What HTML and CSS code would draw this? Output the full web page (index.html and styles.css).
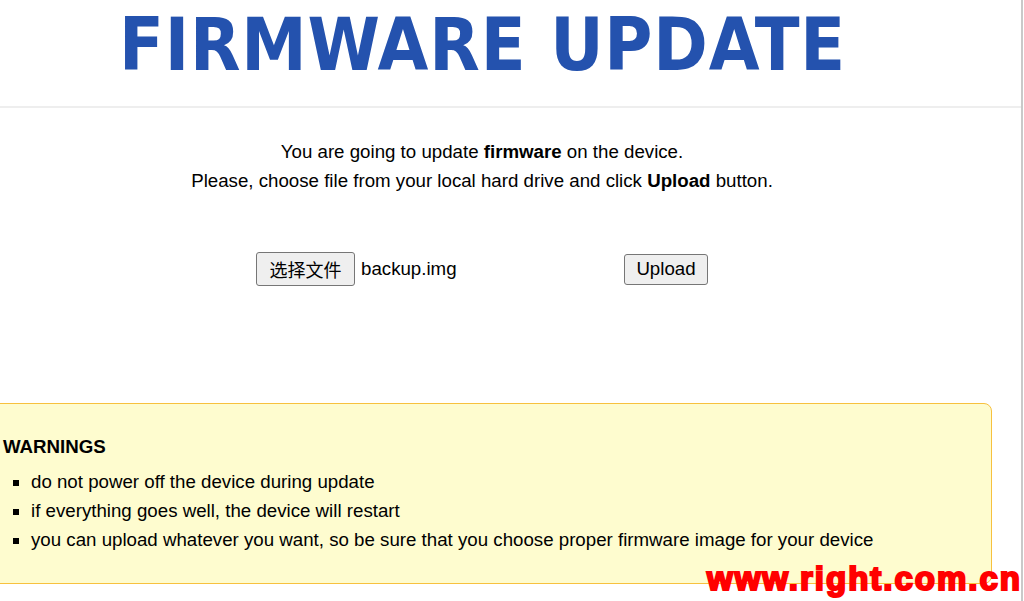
FILE: index.html
```html
<!DOCTYPE html>
<html lang="en">
<head>
<meta charset="utf-8">
<title>Firmware Update</title>
<link rel="stylesheet" href="styles.css">
</head>
<body>
<div class="page">
  <header class="header">
    <div class="column">
      <h1 class="title">FIRMWARE UPDATE</h1>
    </div>
  </header>
  <main class="column content">
    <p class="intro">You are going to update <b>firmware</b> on the device.<br>Please, choose file from your local hard drive and click <b>Upload</b> button.</p>
    <form class="upload-row">
      <div class="file-input">
        <span class="btn btn-file">选择文件</span>
        <span class="file-name">backup.img</span>
      </div>
      <span class="btn btn-upload">Upload</span>
    </form>
    <section class="warning">
      <h2 class="warning-title">WARNINGS</h2>
      <ul class="warning-list">
        <li>do not power off the device during update</li>
        <li>if everything goes well, the device will restart</li>
        <li>you can upload whatever you want, so be sure that you choose proper firmware image for your device</li>
      </ul>
    </section>
  </main>
  <div class="watermark">www.right.com.cn</div>
</div>
</body>
</html>
```

FILE: styles.css
```css
html, body {
  margin: 0;
  padding: 0;
  background: #ffffff;
  overflow: hidden;
}
body {
  font-family: "Liberation Sans", Arial, sans-serif;
  color: #000;
}
.page {
  position: relative;
  width: 1021px;
  height: 601px;
  border-right: 2px solid #c9c9c9;
  overflow: hidden;
}
.column {
  width: 964px;
}
.header {
  height: 106px;
  border-bottom: 2px solid #eeeeee;
}
.title {
  margin: 0;
  padding-top: 5px;
  padding-left: 1px;
  text-align: center;
  font-family: "DejaVu Sans Condensed", "DejaVu Sans", sans-serif;
  font-stretch: condensed;
  font-weight: bold;
  font-size: 73px;
  line-height: 80px;
  color: #2452ae;
  letter-spacing: 0.85px;
}
.content {
  display: flex;
  flex-direction: column;
  align-items: center;
}
.intro {
  margin: 30px 0 0;
  text-align: center;
  font-size: 18.7px;
  line-height: 28.5px;
}
.upload-row {
  margin: 57px 0 0;
  display: flex;
  align-items: center;
  gap: 4px;
  font-size: 18.7px;
}
.file-input {
  width: 364px;
  display: flex;
  align-items: center;
  gap: 6px;
}
.btn {
  box-sizing: border-box;
  display: inline-flex;
  align-items: center;
  justify-content: center;
  background: #efefef;
  border: 1px solid #767676;
  border-radius: 3px;
  color: #000;
}
.btn-file {
  width: 99px;
  height: 34px;
  font-family: "Noto Sans CJK SC", "Liberation Sans", sans-serif;
  font-size: 18px;
}
.btn-upload {
  width: 84px;
  height: 31px;
  font-size: 18.7px;
}
.warning {
  box-sizing: border-box;
  align-self: flex-start;
  margin: 117px 0 0 -27px;
  width: 1019px;
  height: 181px;
  padding: 28px 0 0 29px;
  background: #fefccf;
  border: 1px solid #f7c13e;
  border-radius: 8px;
}
.warning-title {
  margin: 0;
  font-size: 18.7px;
  line-height: 29px;
  font-weight: bold;
}
.warning-list {
  margin: 6px 0 0;
  padding-left: 28px;
  list-style: square;
  font-size: 18.7px;
  line-height: 29px;
}
.watermark {
  position: absolute;
  right: -1px;
  bottom: 5px;
  font-family: "Liberation Sans", Arial, sans-serif;
  font-weight: bold;
  font-size: 33px;
  line-height: 34px;
  color: #ff0000;
  letter-spacing: 2px;
  -webkit-text-stroke: 2.2px #ff0000;
}
```
